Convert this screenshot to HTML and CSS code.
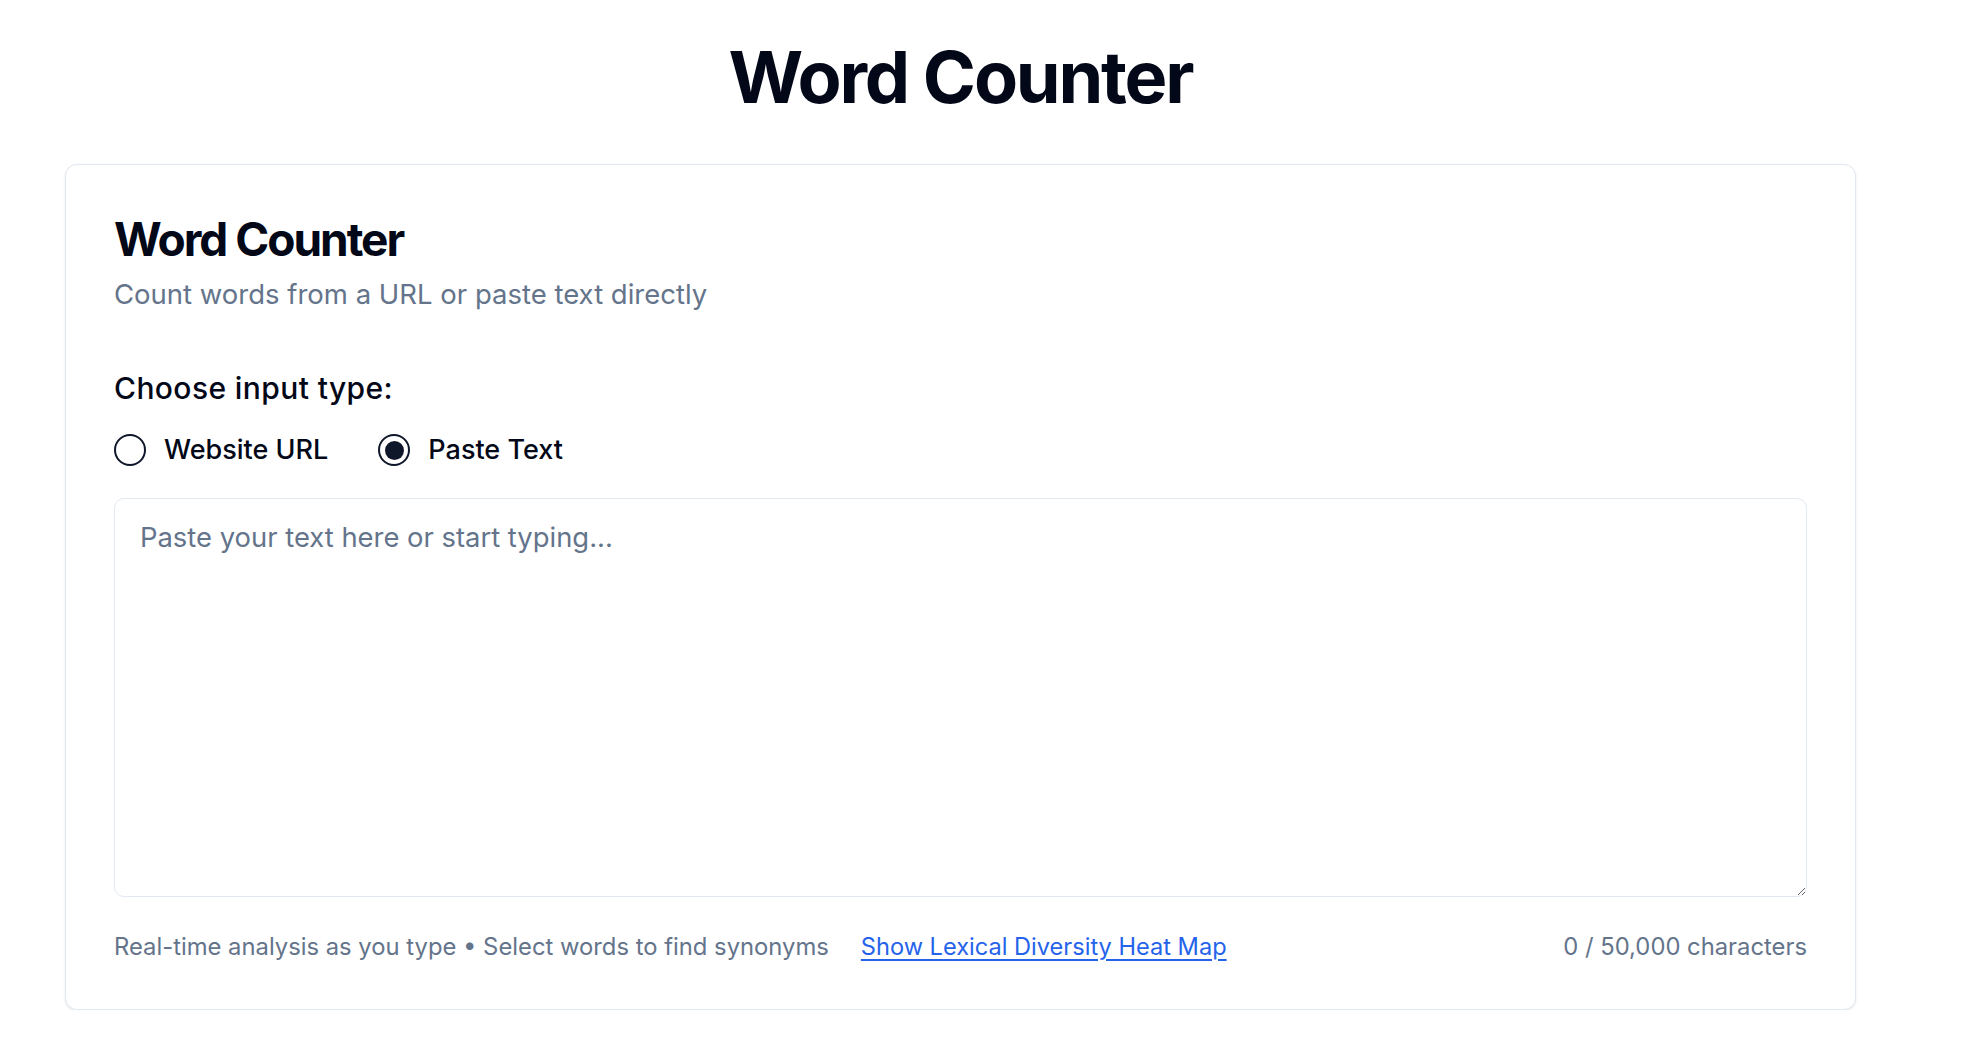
FILE: index.html
```html
<!DOCTYPE html>
<html lang="en">
<head>
<meta charset="utf-8">
<title>Word Counter</title>
<link rel="stylesheet" href="styles.css">
</head>
<body>
<div class="page">
  <h1 class="page-title">Word Counter</h1>
  <section class="card">
    <header class="card-header">
      <h2 class="card-title">Word Counter</h2>
      <p class="card-desc">Count words from a URL or paste text directly</p>
    </header>
    <div class="field">
      <div class="field-label">Choose input type:</div>
      <div class="radios">
        <label class="radio"><span class="radio-circle"></span>Website URL</label>
        <label class="radio"><span class="radio-circle checked"></span>Paste Text</label>
      </div>
    </div>
    <textarea class="text-input" placeholder="Paste your text here or start typing..."></textarea>
    <div class="footer">
      <div class="footer-left">
        <span class="hint">Real-time analysis as you type • Select words to find synonyms</span>
        <a class="link" href="#">Show Lexical Diversity Heat Map</a>
      </div>
      <span class="count">0 / 50,000 characters</span>
    </div>
  </section>
</div>
</body>
</html>
```

FILE: styles.css
```css
* { box-sizing: border-box; }
html, body { margin: 0; padding: 0; background: #ffffff; }
body {
  font-family: Inter, "Noto Sans", "Liberation Sans", sans-serif;
  color: #020817;
}
.page {
  width: 1920px;
  padding: 41px 64px 0 65px;
}
.page-title {
  margin: 0 0 51px 0;
  font-size: 72px;
  line-height: 72px;
  font-weight: 700;
  text-align: center;
  letter-spacing: -2.2px;
  color: #020817;
}
.card {
  border: 1px solid #e2e8f0;
  border-radius: 12px;
  background: #fff;
  box-shadow: 0 1px 3px rgba(15, 23, 42, 0.06), 0 1px 2px rgba(15, 23, 42, 0.04);
  padding: 51px 48px 44px 48px;
  display: flex;
  flex-direction: column;
}
.card-title {
  margin: 0;
  font-size: 46px;
  line-height: 46px;
  font-weight: 700;
  letter-spacing: -2px;
}
.card-desc {
  margin: 11px 0 0 0;
  font-size: 27.5px;
  line-height: 42px;
  color: #64748b;
}
.field { margin-top: 53px; display: flex; flex-direction: column; gap: 22px; }
.field-label {
  font-size: 30px;
  line-height: 40px;
  font-weight: 500;
  letter-spacing: 0.4px;
}
.radios { display: flex; gap: 50px; }
.radio {
  display: flex;
  align-items: center;
  gap: 18px;
  font-size: 27px;
  line-height: 40px;
  font-weight: 500;
}
.radio-circle {
  width: 32px;
  height: 32px;
  border: 2px solid #0f172a;
  border-radius: 50%;
  display: flex;
  align-items: center;
  justify-content: center;
}
.radio-circle.checked::after {
  content: "";
  width: 19px;
  height: 19px;
  border-radius: 50%;
  background: #0f172a;
}
.text-input {
  margin-top: 28px;
  height: 399px;
  width: 100%;
  border: 1px solid #e2e8f0;
  border-radius: 10px;
  padding: 18px 25px;
  font-family: Inter, "Noto Sans", sans-serif;
  font-size: 27.4px;
  line-height: 40px;
  color: #020817;
  resize: vertical;
  outline: none;
}
.text-input::placeholder { color: #64748b; }
.footer {
  margin-top: 32px;
  display: flex;
  justify-content: space-between;
  align-items: baseline;
  font-size: 23.8px;
  line-height: 36px;
  color: #64748b;
}
.footer-left { display: flex; gap: 32px; align-items: baseline; }
.link { color: #2563eb; font-size: 23.6px; text-decoration: underline; text-underline-offset: 4px; }
```
